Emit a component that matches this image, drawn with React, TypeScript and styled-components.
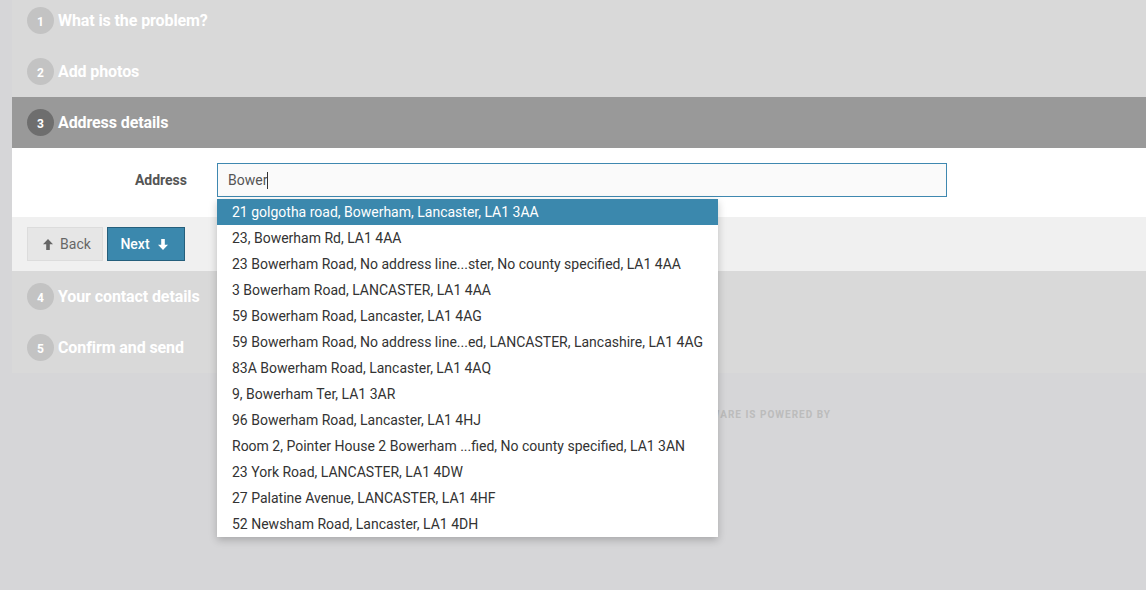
import React from "react";
import styled, { createGlobalStyle } from "styled-components";

const Global = createGlobalStyle`
  html, body { margin: 0; padding: 0; }
  body {
    background: #d6d6d8;
    font-family: Roboto, "Liberation Sans", Arial, sans-serif;
    width: 1146px;
    height: 590px;
    overflow: hidden;
  }
`;

const Page = styled.div`
  padding-left: 12px;
  margin-top: -5px;
`;

const Panel = styled.div`
  background: #d9d9d9;
`;

const StepHeader = styled.div<{ $active?: boolean }>`
  height: 51px;
  display: flex;
  align-items: center;
  padding-left: 15px;
  gap: 4px;
  background: ${(p) => (p.$active ? "#999999" : "transparent")};
`;

const StepNum = styled.span<{ $active?: boolean }>`
  width: 27px;
  height: 27px;
  border-radius: 50%;
  background: ${(p) => (p.$active ? "#6e6e6e" : "#c3c3c3")};
  color: #fff;
  font-size: 12px;
  font-weight: 700;
  display: flex;
  align-items: center;
  justify-content: center;
  padding-top: 2px;
  box-sizing: border-box;
`;

const StepTitle = styled.span`
  color: #fff;
  font-size: 16px;
  font-weight: 700;
  letter-spacing: -0.1px;
  margin-top: 0;
`;

const StepBody = styled.div`
  background: #fff;
  padding: 15px 0 20px;
`;

const FormRow = styled.div`
  display: grid;
  grid-template-columns: 175px 730px;
  column-gap: 30px;
  align-items: center;
`;

const Label = styled.label`
  text-align: right;
  font-size: 14px;
  font-weight: 700;
  color: #555;
`;

const InputWrap = styled.div`
  position: relative;
`;

const Input = styled.div`
  height: 34px;
  box-sizing: border-box;
  border: 1px solid #3f88b0;
  background: #fafafa;
  padding: 0 10px;
  display: flex;
  align-items: center;
  font-size: 14px;
  color: #555;
`;

const Caret = styled.span`
  display: inline-block;
  width: 1px;
  height: 17px;
  background: #333;
`;

const Dropdown = styled.ul`
  position: absolute;
  top: 36px;
  left: 0;
  width: 501px;
  margin: 0;
  padding: 0;
  list-style: none;
  background: #fff;
  box-shadow: 0 3px 8px rgba(0, 0, 0, 0.22);
  z-index: 10;
`;

const Option = styled.li<{ $hi?: boolean }>`
  height: 26px;
  line-height: 26px;
  padding-left: 15px;
  font-size: 14px;
  color: ${(p) => (p.$hi ? "#fff" : "#333")};
  background: ${(p) => (p.$hi ? "#3b88ad" : "#fff")};
  white-space: nowrap;
`;

const StepFooter = styled.div`
  background: #f0f0f0;
  padding: 10px 15px;
  display: flex;
  gap: 4px;
`;

const Button = styled.button<{ $primary?: boolean }>`
  height: 34px;
  box-sizing: border-box;
  display: flex;
  align-items: center;
  justify-content: center;
  gap: ${(p) => (p.$primary ? "8px" : "7px")};
  font-family: inherit;
  font-size: 14px;
  padding: ${(p) => (p.$primary ? "0 4px 0 0" : "0 0 0 4px")};
  width: ${(p) => (p.$primary ? "78px" : "76px")};
  background: ${(p) => (p.$primary ? "#3b88ad" : "#e6e6e6")};
  border: 1px solid ${(p) => (p.$primary ? "#255f7c" : "#dcdcdc")};
  color: ${(p) => (p.$primary ? "#fff" : "#666")};
  font-weight: ${(p) => (p.$primary ? 500 : 400)};
`;

const Powered = styled.div`
  display: flex;
  justify-content: flex-end;
  padding: 36px 315px 0 0;
  font-size: 10px;
  font-weight: 700;
  letter-spacing: 1px;
  color: #bcbcbc;
`;

const Arrow = ({ dir, color }: { dir: "up" | "down"; color: string }) => (
  <svg width="10" height="11" viewBox="0 0 10 11">
    <path
      d="M5 0 L10 5.2 H6.8 V11 H3.2 V5.2 H0 Z"
      fill={color}
      transform={dir === "down" ? "rotate(180 5 5.5)" : undefined}
    />
  </svg>
);

const options = [
  "21 golgotha road, Bowerham, Lancaster, LA1 3AA",
  "23, Bowerham Rd, LA1 4AA",
  "23 Bowerham Road, No address line...ster, No county specified, LA1 4AA",
  "3 Bowerham Road, LANCASTER, LA1 4AA",
  "59 Bowerham Road, Lancaster, LA1 4AG",
  "59 Bowerham Road, No address line...ed, LANCASTER, Lancashire, LA1 4AG",
  "83A Bowerham Road, Lancaster, LA1 4AQ",
  "9, Bowerham Ter, LA1 3AR",
  "96 Bowerham Road, Lancaster, LA1 4HJ",
  "Room 2, Pointer House 2 Bowerham ...fied, No county specified, LA1 3AN",
  "23 York Road, LANCASTER, LA1 4DW",
  "27 Palatine Avenue, LANCASTER, LA1 4HF",
  "52 Newsham Road, Lancaster, LA1 4DH",
];

const Step = ({ n, title, active }: { n: number; title: string; active?: boolean }) => (
  <StepHeader $active={active}>
    <StepNum $active={active}>{n}</StepNum>
    <StepTitle>{title}</StepTitle>
  </StepHeader>
);

export default function App() {
  return (
    <>
      <Global />
      <Page>
        <Panel>
          <Step n={1} title="What is the problem?" />
          <Step n={2} title="Add photos" />
          <Step n={3} title="Address details" active />
          <StepBody>
            <FormRow>
              <Label>Address</Label>
              <InputWrap>
                <Input>
                  Bower
                  <Caret />
                </Input>
                <Dropdown>
                  {options.map((o, i) => (
                    <Option key={o} $hi={i === 0}>
                      {o}
                    </Option>
                  ))}
                </Dropdown>
              </InputWrap>
            </FormRow>
          </StepBody>
          <StepFooter>
            <Button>
              <Arrow dir="up" color="#666" />
              Back
            </Button>
            <Button $primary>
              Next
              <Arrow dir="down" color="#fff" />
            </Button>
          </StepFooter>
          <Step n={4} title="Your contact details" />
          <Step n={5} title="Confirm and send" />
        </Panel>
        <Powered>THIS SOFTWARE IS POWERED BY</Powered>
      </Page>
    </>
  );
}
